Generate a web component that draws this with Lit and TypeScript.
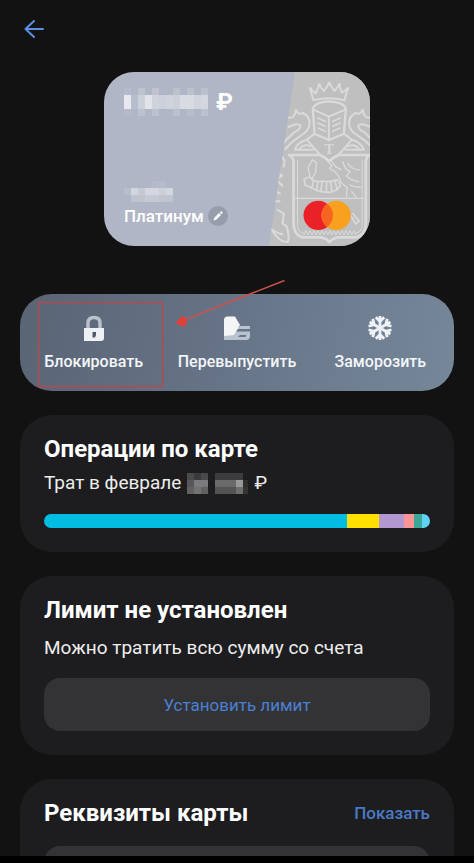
import { LitElement, html, css, svg } from "lit";
import { customElement } from "lit/decorators.js";

// One mosaic cell: x, y, width, height, opacity
type Cell = [number, number, number, number, number];

const amountCells: Cell[] = [
  [0, 0, 7, 7, 0.08], [14, 0, 7, 7, 0.18], [28, 0, 7, 7, 0.18], [49, 0, 7, 7, 0.16], [63, 0, 7, 7, 0.16], [77, 0, 7, 7, 0.16],
  [0, 7, 7, 14, 0.7], [7, 7, 7, 14, 0.12], [14, 7, 7, 14, 0.36], [21, 7, 7, 14, 0.62], [28, 7, 7, 14, 0.4],
  [35, 7, 7, 14, 0.36], [42, 7, 7, 14, 0.4], [49, 7, 7, 14, 0.36], [56, 7, 7, 14, 0.5], [63, 7, 7, 14, 0.5], [70, 7, 7, 14, 0.42], [77, 7, 7, 14, 0.46],
  [0, 21, 7, 7, 0.06], [14, 21, 7, 7, 0.16], [28, 21, 7, 7, 0.16], [49, 21, 7, 7, 0.14], [63, 21, 7, 7, 0.1], [77, 21, 7, 7, 0.16],
];

const nameCells: Cell[] = [
  [28, 0, 14, 7, 0.08],
  [0, 7, 7, 7, 0.1], [7, 7, 7, 7, 0.44], [14, 7, 7, 7, 0.28], [21, 7, 14, 7, 0.46], [35, 7, 7, 7, 0.34], [42, 7, 7, 7, 0.44],
  [7, 14, 14, 7, 0.2], [21, 14, 14, 7, 0.26], [35, 14, 14, 7, 0.2],
];

const spendCells: Cell[] = [
  [0, 0, 7, 7, 0.2], [7, 0, 7, 7, 0.13], [14, 0, 7, 7, 0.2],
  [0, 7, 7, 7, 0.26], [7, 7, 14, 7, 0.42], [0, 14, 7, 7, 0.3], [7, 14, 7, 7, 0.38], [14, 14, 7, 7, 0.3],
  [28, 0, 28, 7, 0.14],
  [28, 7, 21, 7, 0.34], [49, 7, 7, 7, 0.55], [56, 7, 5, 7, 0.08],
  [28, 14, 21, 7, 0.24], [49, 14, 7, 7, 0.36], [56, 14, 5, 7, 0.1],
];

const mosaic = (cells: Cell[], w: number, h: number) => html`
  <svg class="mosaic" width=${w} height=${h} viewBox="0 0 ${w} ${h}" aria-label="Скрыто" role="img" shape-rendering="crispEdges">
    ${cells.map(([x, y, cw, ch, o]) => svg`<rect x=${x} y=${y} width=${cw} height=${ch} fill="#fff" fill-opacity=${o} />`)}
  </svg>`;

@customElement("bank-card")
export class BankCard extends LitElement {
  static styles = css`
    :host { display: block; }
    .card {
      position: relative;
      box-sizing: border-box;
      width: 266px;
      min-height: 174px;
      padding: 16px 20px 18px;
      border-radius: 30px;
      overflow: hidden;
      background: #b0b6c5;
      color: #fff;
      display: flex;
      flex-direction: column;
    }
    .art { position: absolute; inset: 0; width: 100%; height: 100%; }
    .amount, .name, .holder { position: relative; display: flex; align-items: center; }
    .amount { gap: 8px; font-size: 24px; line-height: 28px; font-weight: 700; }
    .holder { margin-top: auto; }
    .name { gap: 4px; margin-top: 2px; font-size: 17px; line-height: 24px; font-weight: 500; }
    .edit {
      width: 20px; height: 20px; padding: 0; border: 0; border-radius: 50%;
      background: #979dab; display: grid; place-items: center;
    }
    .mosaic { display: block; }
  `;

  render() {
    return html`
      <div class="card">
        <svg class="art" viewBox="-408 18 795 522" aria-hidden="true">
          <defs>
            <clipPath id="side"><path d="M163 18H390V542H85Z" /></clipPath>
          </defs>
          <g clip-path="url(#side)">
            <rect x="80" y="16" width="312" height="528" fill="#bfbfbf" />
            <g fill="none" stroke="#dadada" stroke-width="6" stroke-linejoin="round" stroke-linecap="round">
              <path d="M219 103L209 69L226 82L236 57L250 75L266 52L282 75L296 57L304 80L321 69L312 103Q266 91 219 103Z" />
              <circle cx="236" cy="56" r="2" /><circle cx="266" cy="52" r="2" /><circle cx="296" cy="56" r="2" />
              <circle cx="210" cy="68" r="2" /><circle cx="321" cy="68" r="2" />
              <path d="M217 128Q222 108 266 106Q310 108 316 128L310 204Q288 212 266 222Q243 212 222 204Z" stroke-width="7" />
              <path d="M217 130L265 152L316 130M265 152V220" />
              <path d="M232 156L254 166M232 171L254 181M233 186L254 196M299 156L277 166M299 171L277 181M298 186L277 196" stroke-width="5" />
              <path d="M142 155Q164 159 166 131Q173 148 188 141Q208 152 207 172Q207 190 192 201L160 224Q146 235 134 250" />
              <path d="M144 183Q171 169 180 179Q180 190 160 200L130 229" />
              <path d="M391 155Q369 159 367 131Q360 148 345 141Q325 152 326 172Q326 190 341 201L373 224Q388 235 398 250" />
              <path d="M390 183Q362 169 353 179Q353 190 373 200L402 229" />
              <path d="M219 206L199 221Q170 229 163 251H218M314 206L334 221Q362 229 370 251H315" />
              <path d="M177 249Q190 232 210 241M356 249Q343 232 323 241" />
              <path d="M199 221L239 267Q251 273 266 285Q281 273 294 267L334 221" />
              <path d="M146 267H238Q254 274 266 286Q278 274 294 267H388M146 267Q161 275 159 294V472Q160 506 184 514H240Q257 516 267 528Q277 516 294 514H350Q375 506 376 472V294Q374 275 388 267" stroke-width="8" />
              <path d="M171 282V478Q173 500 190 502M365 282V478Q363 500 346 502" stroke-width="3" />
              <path d="M164 397H371" stroke-width="4" />
              <path d="M191 340Q209 327 215 341Q233 350 246 345Q271 350 288 341Q296 344 299 361Q286 378 265 379Q234 378 217 367L194 357Z" stroke-width="5" />
              <path d="M219 344L214 367M232 348L228 374M245 347L241 377M258 347V378M271 346L274 378M283 343L290 372" stroke-width="5" />
              <path d="M209 335L203 304L216 281L228 290L225 319L215 338Z" stroke-width="4" />
              <path d="M263 288L274 298L267 308L283 316L295 332L302 350L320 365L318 393M274 286L285 302L302 311M307 287Q313 313 329 316L318 330Q331 343 354 347M321 292Q336 311 356 312M328 357Q346 365 360 363M334 377L347 394" stroke-width="4" />
              <path d="M329 445L346 474L356 465L337 443" stroke-width="5" />
              <path d="M190 507l6-13 6 13 6-13 6 13 6-13 6 13 6-13 6 13 6-13 6 13 6-13 6 13 6-13 6 13 6-13 6 13 6-13 6 13 6-13 6 13 6-13 6 13 6-13 6 13 6-13 6 13" stroke-width="3" />
              <path d="M111 432L130 443L126 472L139 482Q150 528 139 528Q117 530 92 488Q104 500 126 505" />
              <path d="M125 273Q137 285 129 302M110 320L125 329L108 342L126 359M103 374L118 383M104 406H117" />
            </g>
            <text x="266" y="265" text-anchor="middle" font-family="Liberation Serif, serif" font-weight="700" font-size="42" fill="#dadada">T</text>
          </g>
          <circle cx="233" cy="448" r="44" fill="#ea2127" />
          <circle cx="287" cy="448" r="44" fill="#f9a01f" />
          <path d="M260 413A44 44 0 0 1 260 483A44 44 0 0 1 260 413Z" fill="#f7641f" />
        </svg>
        <div class="amount">${mosaic(amountCells, 84, 28)}<span>₽</span></div>
        <div class="holder">${mosaic(nameCells, 49, 21)}</div>
        <div class="name">
          <span>Платинум</span>
          <button class="edit" aria-label="Изменить название">
            <svg width="12" height="12" viewBox="0 0 12 12"><path d="M1.5 10.5L2.3 7.8L7 3L9 5L4.2 9.7ZM7.7 2.3L8.5 1.6Q9.4 1 10.2 1.8Q11 2.6 10.4 3.5L9.7 4.3Z" fill="#fff" /></svg>
          </button>
        </div>
      </div>`;
  }
}

@customElement("card-actions")
export class CardActions extends LitElement {
  static styles = css`
    :host { display: block; }
    .bar {
      position: relative;
      display: grid;
      grid-template-columns: repeat(3, 1fr);
      padding: 0 2px;
      border-radius: 32px;
      background: linear-gradient(100deg, #596575 0%, #667386 45%, #76879a 100%);
    }
    .action {
      display: flex; flex-direction: column; align-items: center; gap: 6px;
      padding: 20px 0 17px; border: 0; background: none;
      font: 500 16px/24px Roboto, "Noto Sans", sans-serif;
      color: #f4f6f9; white-space: nowrap;
    }
    .action svg { display: block; }
    .mark { position: absolute; left: 0; top: -16px; pointer-events: none; }
  `;

  render() {
    return html`
      <div class="bar">
        <button class="action">
          <svg width="30" height="30" viewBox="0 0 30 30" aria-hidden="true">
            <path d="M9 15V9Q9 3.500 15 3.500Q21 3.500 21 9V15" fill="none" stroke="#b9c1cc" stroke-width="3.500" />
            <path d="M5 14H25V24Q25 27 22 27H5Z" fill="#eef0f3" />
            <path d="M13.500 18H17V21L16 23.500H13.500Z" fill="#4f5a69" />
          </svg>
          <span>Блокировать</span>
        </button>
        <button class="action">
          <svg width="30" height="30" viewBox="0 0 30 30" aria-hidden="true">
            <path d="M2 18H12L18 12H28V22Q28 26 24 26H2Z" fill="#b9c2cf" />
            <path d="M16 15H28V17.500H14Z" fill="#66758a" />
            <path d="M18 21H24.500L23.500 23H16Z" fill="#66758a" />
            <path d="M2 6Q2 2.500 5.500 2.500H13L18 11L12 21L2 22Z" fill="#f3f5f7" />
          </svg>
          <span>Перевыпустить</span>
        </button>
        <button class="action">
          <svg width="30" height="30" viewBox="-15 -14 30 30" aria-hidden="true">
            <g fill="none" stroke="#eef1f6" stroke-width="2.800">
              ${[0, 60, 120, 180, 240, 300].map((a) => svg`<path transform="rotate(${a})" d="M0 0V-12M-4.200 -10.800L0 -6.600L4.200 -10.800" />`)}
            </g>
          </svg>
          <span>Заморозить</span>
        </button>
        <svg class="mark" width="270" height="112" viewBox="20 278 270 112" aria-hidden="true">
          <rect x="38.500" y="302.500" width="124" height="84" fill="none" stroke="#b34a50" stroke-width="1.500" />
          <path d="M284.500 280.500L184 320" stroke="#c9524e" stroke-width="1.600" />
          <path d="M175 323L183 315.500L187.500 321L184.500 327Z" fill="#e0403a" />
        </svg>
      </div>`;
  }
}

const segments: [string, number][] = [
  ["#02bce2", 304], ["#ffe000", 32], ["#b397d1", 25], ["#fb9595", 10], ["#3ba797", 8], ["#5fd3f5", 8],
];

@customElement("app-root")
export class AppRoot extends LitElement {
  static styles = css`
    :host {
      display: flex; flex-direction: column; height: 100vh;
      background: #121212; color: #fff;
      font-family: Roboto, "Noto Sans", sans-serif;
    }
    .screen { flex: 1; min-height: 0; overflow-y: auto; scrollbar-width: none; }
    .nav { height: 7px; background: #000; }
    .top { display: flex; padding: 17px 22px 19px; }
    .back { padding: 0; border: 0; background: none; height: 24px; }
    .back svg { display: block; }
    .hero { display: flex; justify-content: center; padding: 12px 0 48px; }
    .stack { display: flex; flex-direction: column; gap: 24px; padding: 0 20px 24px; }
    .panel { background: #1d1d1f; border-radius: 32px; padding: 20px 24px 24px; }
    h2 { margin: 0; font-size: 24px; line-height: 28px; font-weight: 700; }
    .text { margin: 0; font-size: 19px; line-height: 24px; color: #ededed; }
    .spend { display: flex; align-items: center; gap: 6px; margin-top: 8px; }
    .meter { display: flex; height: 14px; margin-top: 19px; border-radius: 7px; overflow: hidden; }
    .note { margin-top: 12px; }
    .limit {
      display: block; width: 100%; height: 53px; margin-top: 18px;
      border: 0; border-radius: 16px; background: #333335;
      font: 400 17px/24px Roboto, "Noto Sans", sans-serif; color: #4a80d3;
    }
    .head { display: flex; justify-content: space-between; align-items: center; }
    .show { font-size: 17px; line-height: 24px; font-weight: 500; color: #4a7ac6; text-decoration: none; }
    .field { height: 56px; margin-top: 19px; border-radius: 16px; background: #333335; }
    .mosaic { display: block; }
  `;

  render() {
    return html`
      <main class="screen">
        <header class="top">
          <button class="back" aria-label="Назад">
            <svg width="24" height="24" viewBox="0 0 24 24" fill="none" stroke="#5b8fe6" stroke-width="2" stroke-linecap="round" stroke-linejoin="round"><path d="M21 12H4M12 4L3.500 12L12 20" /></svg>
          </button>
        </header>
        <div class="hero"><bank-card></bank-card></div>
        <div class="stack">
          <card-actions></card-actions>
          <section class="panel">
            <h2>Операции по карте</h2>
            <p class="text spend"><span>Трат в феврале</span>${mosaic(spendCells, 61, 21)}<span>₽</span></p>
            <div class="meter">
              ${segments.map(([c, n]) => html`<span style="flex:${n} 0 0;background:${c}"></span>`)}
            </div>
          </section>
          <section class="panel">
            <h2>Лимит не установлен</h2>
            <p class="text note">Можно тратить всю сумму со счета</p>
            <button class="limit">Установить лимит</button>
          </section>
          <section class="panel">
            <div class="head"><h2>Реквизиты карты</h2><a class="show" href="#details">Показать</a></div>
            <div class="field"></div>
          </section>
        </div>
      </main>
      <div class="nav"></div>`;
  }
}
